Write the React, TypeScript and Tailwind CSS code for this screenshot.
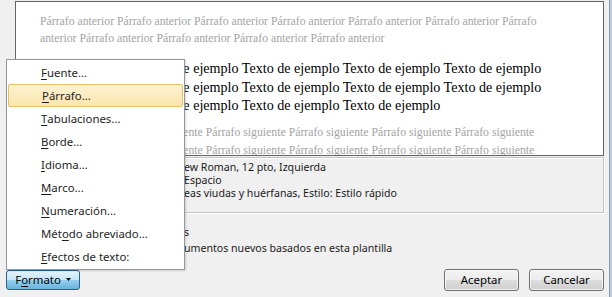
const MENU = [
  { pre: "", key: "F", post: "uente..." },
  { pre: "", key: "P", post: "árrafo...", active: true },
  { pre: "", key: "T", post: "abulaciones..." },
  { pre: "", key: "B", post: "orde..." },
  { pre: "", key: "I", post: "dioma..." },
  { pre: "", key: "M", post: "arco..." },
  { pre: "", key: "N", post: "umeración..." },
  { pre: "Mét", key: "o", post: "do abreviado..." },
  { pre: "", key: "E", post: "fectos de texto:" },
];

const DESC = [
  ["Fuente: Times N", "ew Roman, 12 pto, Izquierda"],
  ["Interlineado: sencillo, ", "Espacio"],
  ["Después: 10 pto, Control de lín", "eas viudas y huérfanas, Estilo: Estilo rápido"],
];

const OPTIONS = [
  ["Agregar a la lista de estilo", "s"],
  ["Doc", "umentos nuevos basados en esta plantilla"],
];

function repeat(text: string, n: number) {
  return Array(n).fill(text).join(" ");
}

function ContextMenu() {
  return (
    <div className="absolute left-[6px] top-[59px] w-[179px] border border-[#979797] bg-white px-px py-px shadow-[1px_1px_2px_rgba(0,0,0,0.15)]">
      {MENU.map((m) => (
        <div
          key={m.post}
          className={`flex h-[23px] items-center pl-[33px] text-[11.4px] text-[#1e1e1e] ${
            m.active
              ? "rounded-[2px] border border-[#e5c365] bg-gradient-to-b from-[#fdf1cf] to-[#fce6ae] pl-[32px]"
              : ""
          }`}
        >
          {m.pre}
          <span className="underline underline-offset-[2px]">{m.key}</span>
          {m.post}
        </div>
      ))}
    </div>
  );
}

export default function App() {
  return (
    <div className="relative flex h-[297px] w-[612px] overflow-hidden bg-[#f0f0f0] font-['Noto_Sans',sans-serif] text-black">
      <div className="flex flex-1 flex-col pl-[6px] pr-[5px] pt-px">
        {/* Preview */}
        <div className="ml-[9px] h-[155px] overflow-hidden border border-[#646464] bg-white pl-[24px] pt-[11px] font-['Liberation_Serif',serif]">
          <div className="w-[520px]">
            <p className="text-[11.76px] leading-[17px] text-[#a3a3a3]">
              {repeat("Párrafo anterior", 11)}
            </p>
            <p className="mt-[12px] text-[14.1px] leading-[18.5px]">
              {repeat("Texto de ejemplo", 14)}
            </p>
            <p className="mt-[9px] text-[11.76px] leading-[18px] text-[#a3a3a3]">
              {repeat("Párrafo siguiente", 14)}
            </p>
          </div>
        </div>

        {/* Description */}
        <div className="ml-[9px] mt-px h-[56px] border border-[#c4c4c4] pl-[4px] pt-[3px] text-[10.6px] leading-[13px] text-[#1a1a1a] shadow-[inset_1px_1px_0_#fff,1px_1px_0_#fff]">
          {DESC.map(([a, b]) => (
            <div key={b} className="flex whitespace-nowrap">
              <span className="w-[164px] shrink-0 overflow-hidden text-right">{a}</span>
              <span>{b}</span>
            </div>
          ))}
        </div>

        <div className="ml-[9px] mt-[11px] text-[10.6px] leading-[16px] text-[#1a1a1a]">
          {OPTIONS.map(([a, b]) => (
            <div key={b} className="flex whitespace-nowrap">
              <span className="w-[169px] shrink-0 overflow-hidden text-right">{a}</span>
              <span>{b}</span>
            </div>
          ))}
        </div>

        {/* Buttons */}
        <div className="mt-[13px] flex h-[22px] items-center text-[11.4px]">
          <button className="flex h-[20px] w-[74px] items-center justify-center gap-[5px] rounded-[3px] border border-[#2c628b] bg-[linear-gradient(#e5f4fc_0%,#c4e5f6_50%,#98d1ef_50%,#68b3db_100%)] pb-px">
            <span>
              F<span className="underline underline-offset-[2px]">o</span>rmato
            </span>
            <svg width="5" height="3" viewBox="0 0 5 3">
              <path d="M0 0h5L2.5 3z" fill="#000" />
            </svg>
          </button>
          <button className="ml-auto h-[22px] w-[75px] rounded-[3px] border border-[#707070] bg-[linear-gradient(#f2f2f2_0%,#ebebeb_50%,#dddddd_50%,#cfcfcf_100%)] shadow-[inset_0_0_0_1px_rgba(255,255,255,0.7)]">
            Aceptar
          </button>
          <button className="ml-[10px] h-[22px] w-[75px] rounded-[3px] border border-[#707070] bg-[linear-gradient(#f2f2f2_0%,#ebebeb_50%,#dddddd_50%,#cfcfcf_100%)] shadow-[inset_0_0_0_1px_rgba(255,255,255,0.7)]">
            Cancelar
          </button>
        </div>
      </div>

      {/* Window frame */}
      <div className="w-[3px] border-l border-[#8e9db2] bg-[#bccbde]" />

      <ContextMenu />
    </div>
  );
}
